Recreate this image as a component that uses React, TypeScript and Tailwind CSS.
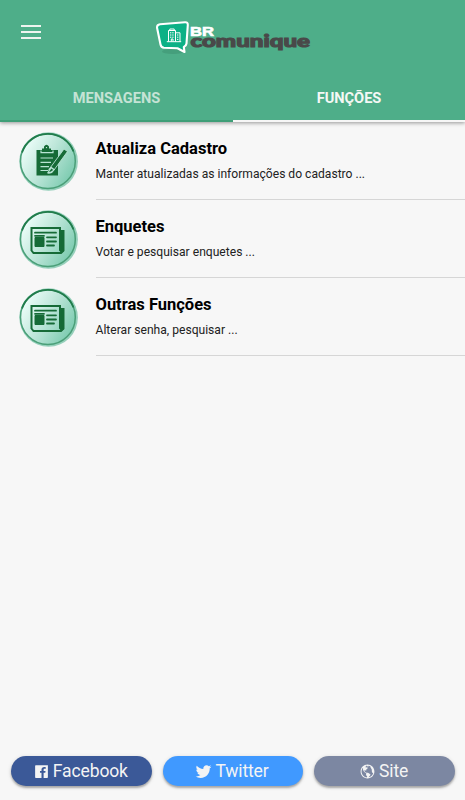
import React from "react";
import { IoLogoFacebook, IoLogoTwitter, IoMdGlobe } from "react-icons/io";

function Logo() {
  return (
    <svg width="175" height="50" viewBox="0 0 175 50" role="img" aria-label="BR comunique">
      <ellipse cx="28" cy="41.5" rx="11" ry="2.5" fill="#3f9573" opacity="0.6" />
      <path
        d="M15 14.3 Q12 14.6 12 17.5 L15.5 34.5 Q16.2 37.6 19 37.8 L32.5 38.3 L39.5 42 L38.8 37 Q41.2 36 41.5 33.5 L42.8 15 Q42.9 12 40 12.2 Z"
        fill="#0cb186" stroke="#fff" strokeWidth="2.1" strokeLinejoin="round"
      />
      <g fill="none" stroke="#fff" strokeWidth="1">
        <path d="M23.5 31.5V20.5H30.5V31.5M31 22.8H35V31.5M21.8 31.7H36.2M24.8 20V19H29.2V20M26.3 31.5V29H28V31.5" />
        <path d="M25 22.8H29.5M25 25H29.5M25 27.2H29.5M32 25H34M32 27.2H34M32 29.4H34" strokeDasharray="1.4 0.8" />
      </g>
      <text
        x="45" y="25.6" textLength="24" lengthAdjust="spacingAndGlyphs"
        fontSize="12.6" strokeWidth="0.6" className="fill-white stroke-white font-['Liberation_Sans',sans-serif] font-bold"
      >
        BR
      </text>
      <text
        x="45.5" y="37" textLength="119.5" lengthAdjust="spacingAndGlyphs"
        fontSize="17" strokeWidth="1.1" className="fill-[#494949] stroke-[#494949] font-['Lato',sans-serif] font-black"
      >
        comunique
      </text>
    </svg>
  );
}

function Clipboard() {
  return (
    <g>
      <path d="M17.5 18H23V16.5H25V14.5Q27.5 11 30 14.5V16.5H32V18H39V43.5H17.5Z" fill="#166b37" />
      <circle cx="27.5" cy="15.6" r="0.7" fill="#d7f1e8" />
      <path d="M22 18.5V20.7H34V18.5M21.5 26H34M21.5 30.3H32M21.5 34.6H30M21.5 38.5H29" fill="none" stroke="#b9e3d4" strokeWidth="1.2" />
      <path d="M45 17L48.5 19.5L35 38L31 40L31.8 35Z" fill="#166b37" stroke="#b9e3d4" strokeWidth="0.9" />
      <path d="M32 34.5L36 37.5L33 41Q29 42.5 28 41Q30 39.5 29.5 37Z" fill="#b9e3d4" />
      <path d="M32.5 36.5L34.2 38L31.5 39.8H30Z" fill="#166b37" />
    </g>
  );
}

function Newspaper() {
  return (
    <g fill="none" stroke="#166b37">
      <path d="M41 21H44.5V40.5L42 43H14.5L12.5 40.5V18H41V40L43 42" strokeWidth="2" />
      <path d="M41.5 21.5H44V41L42.5 42L41.5 40Z" fill="#166b37" strokeWidth="1.5" />
      <path d="M16 22.7H37M28 27.3H37M28 31.5H37M28 35.5H35M16 25.8H25" strokeWidth="1.8" strokeLinecap="round" />
      <path d="M16 27.5H25V36.5H16Z" fill="#166b37" strokeWidth="1" />
    </g>
  );
}

function Badge({ kind }: { kind: "clipboard" | "newspaper" }) {
  const id = `badge-${kind}`;
  return (
    <svg width="60" height="60" viewBox="0 0 60 60" className="shrink-0" aria-hidden="true">
      <defs>
        <linearGradient id={id} x1="0.1" y1="0.25" x2="0.95" y2="0.75">
          <stop offset="0" stopColor="#e8fbf6" />
          <stop offset="0.45" stopColor="#bde6d9" />
          <stop offset="1" stopColor="#7ccbb0" />
        </linearGradient>
      </defs>
      <circle cx="29.6" cy="29.5" r="29.3" fill="#96d0bb" />
      <circle cx="28.9" cy="29.2" r="27.4" fill={`url(#${id})`} stroke="#4a9f78" strokeWidth="1.5" />
      <path d="M3 20.5A27.4 27.4 0 0 1 54.5 19.5" fill="none" stroke="#217c4b" strokeWidth="1.8" />
      {kind === "clipboard" ? <Clipboard /> : <Newspaper />}
    </svg>
  );
}

const items: { title: string; detail: string; kind: "clipboard" | "newspaper" }[] = [
  { title: "Atualiza Cadastro", detail: "Manter atualizadas as informações do cadastro ...", kind: "clipboard" },
  { title: "Enquetes", detail: "Votar e pesquisar enquetes ...", kind: "newspaper" },
  { title: "Outras Funções", detail: "Alterar senha, pesquisar ...", kind: "newspaper" },
];

const buttonClass =
  "flex h-[30px] flex-1 items-center justify-center gap-[3px] rounded-full pr-0.5 text-[17.5px] tracking-[-0.12px] text-[#f4f4f4] shadow-[0_2px_2px_rgba(0,0,0,0.25),0_1px_4px_rgba(0,0,0,0.15)]";

export default function App() {
  return (
    <div className="flex h-[800px] w-[465px] flex-col overflow-hidden bg-[#f7f7f7] font-['Roboto',sans-serif] text-black">
      <header className="z-10 flex h-[122px] shrink-0 flex-col bg-[#4eae89] shadow-[0_1px_4px_rgba(0,0,0,0.4)]">
        <div className="flex h-[75px] items-start pt-[10px]">
          <button aria-label="Menu" className="ml-[21px] mt-[15px] flex h-[14px] w-5 flex-col justify-between">
            <span className="h-[2px] w-full bg-[#eef4ef]" />
            <span className="h-[2px] w-full bg-[#eef4ef]" />
            <span className="h-[2px] w-full bg-[#eef4ef]" />
          </button>
          <div className="ml-[104px]"><Logo /></div>
        </div>
        <nav className="flex h-[47px] text-[14.6px] font-bold">
          <button className="w-[233px] border-b-2 border-[#3f9f78] pt-[2px] text-[#c5e3d5]">MENSAGENS</button>
          <button className="flex-1 border-b-2 border-[#f7f7f7] pt-[2px] text-[#f4f8f5]">FUNÇÕES</button>
        </nav>
      </header>
      <main className="flex-1">
        {items.map((item) => (
          <div key={item.title} className="flex h-[78px] pl-[19px]">
            <div className="pt-[10px]"><Badge kind={item.kind} /></div>
            <div className="ml-[16.5px] flex-1 border-b border-[#d6d6d6] pt-[15px]">
              <h2 className="text-[16.5px] leading-[23px] font-bold">{item.title}</h2>
              <p className="mt-[6px] text-[12.1px] leading-[17px] text-[#222]">{item.detail}</p>
            </div>
          </div>
        ))}
      </main>
      <footer className="flex h-[44px] shrink-0 gap-[11px] pr-[10px] pl-[11px]">
        <button className={`${buttonClass} bg-[#3b5998]`}><IoLogoFacebook size={17} />Facebook</button>
        <button className={`${buttonClass} bg-[#4099ff]`}><IoLogoTwitter size={17} />Twitter</button>
        <button className={`${buttonClass} bg-[#7c87a2]`}><IoMdGlobe size={17} />Site</button>
      </footer>
    </div>
  );
}
